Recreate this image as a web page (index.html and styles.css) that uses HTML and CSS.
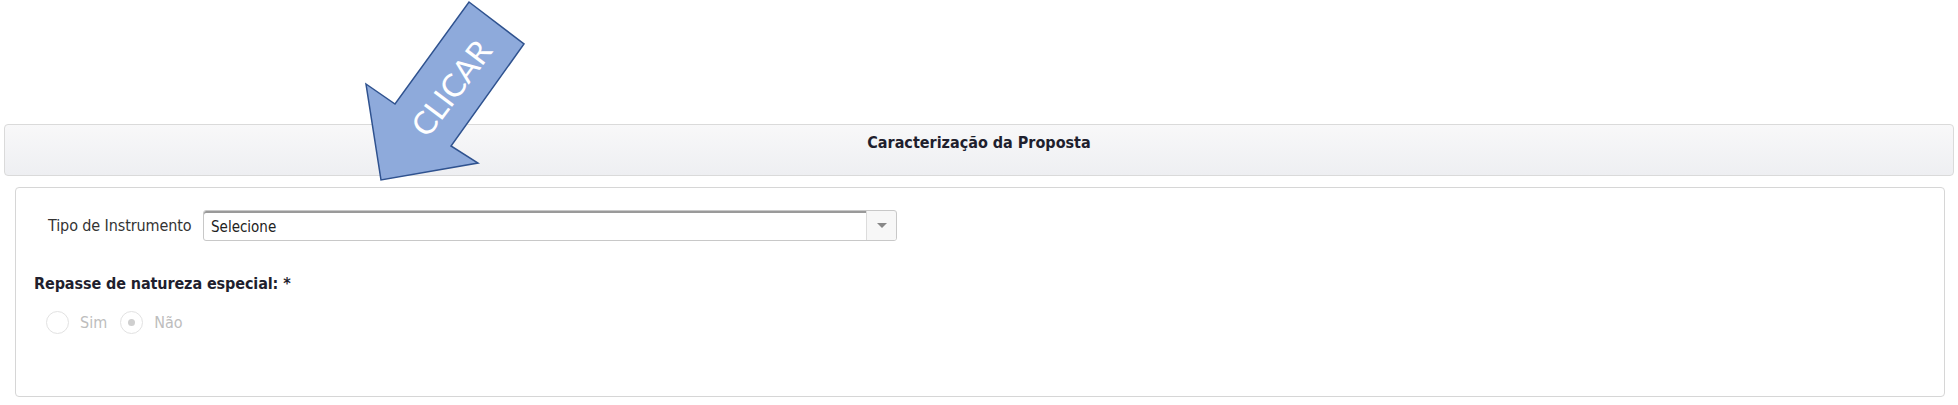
FILE: index.html
```html
<!DOCTYPE html>
<html lang="pt-BR">
<head>
<meta charset="utf-8">
<title>Caracterização da Proposta</title>
<link rel="stylesheet" href="styles.css">
</head>
<body>
<div class="page">
  <div class="header">
    <span class="header-title">Caracterização da Proposta</span>
  </div>
  <div class="panel">
    <div class="field-row">
      <label class="field-label">Tipo de Instrumento</label>
      <div class="select">
        <span class="select-value">Selecione</span>
        <span class="select-btn"><span class="caret"></span></span>
      </div>
    </div>
    <div class="section-title">Repasse de natureza especial: *</div>
    <div class="radio-row">
      <span class="radio"></span><span class="radio-text">Sim</span>
      <span class="radio checked"><span class="dot"></span></span><span class="radio-text">Não</span>
    </div>
  </div>
  <svg class="callout" width="180" height="190" viewBox="355 -5 180 190">
    <polygon points="469,2 524,44 451,146 478,163 381,180 366,84 395,104" fill="#8eaadb" stroke="#2f528f" stroke-width="1.5" stroke-linejoin="miter"/>
    <text x="451" y="100" transform="rotate(-53 451 88)" text-anchor="middle" class="callout-text">CLICAR</text>
  </svg>
</div>
</body>
</html>
```
FILE: styles.css
```css
* { box-sizing: border-box; }
html, body { margin: 0; padding: 0; background: #ffffff; }
.page {
  position: relative;
  width: 1958px;
  height: 405px;
  padding-top: 124px;
  font-family: "DejaVu Sans Condensed", "DejaVu Sans", sans-serif;
}
.header {
  margin: 0 4px;
  height: 52px;
  border: 1px solid #dadada;
  border-radius: 4px;
  background: linear-gradient(#f8f8f9, #eeeff2);
  display: flex;
  justify-content: center;
  padding-top: 8px;
}
.header-title {
  font-weight: bold;
  font-size: 16px;
  color: #1f1f2e;
  line-height: 20px;
}
.panel {
  margin: 11px 13px 0 15px;
  height: 210px;
  border: 1px solid #d6d6d6;
  border-radius: 4px;
  padding: 22px 0 0 18px;
}
.field-row {
  display: flex;
  align-items: center;
  padding-left: 14px;
}
.field-label {
  font-size: 16px;
  line-height: 20px;
  color: #333333;
  width: 155px;
  letter-spacing: -0.1px;
}
.select {
  width: 694px;
  height: 31px;
  border: 1px solid #c8c8c8;
  border-radius: 3px;
  box-shadow: inset 0 2px 0 #9a9a9a;
  display: flex;
  align-items: center;
  overflow: hidden;
}
.select-value {
  flex: 1;
  font-size: 15px;
  line-height: 20px;
  color: #222;
  padding-left: 7px;
  padding-top: 2px;
}
.select-btn {
  width: 30px;
  height: 100%;
  border-left: 1px solid #dcdcdc;
  background: #f7f7f7;
  display: flex;
  align-items: center;
  justify-content: center;
}
.caret {
  width: 0;
  height: 0;
  border-left: 5px solid transparent;
  border-right: 5px solid transparent;
  border-top: 5px solid #888;
}
.section-title {
  margin-top: 33px;
  font-weight: bold;
  font-size: 16px;
  line-height: 20px;
  color: #1f1f2e;
  letter-spacing: -0.1px;
}
.radio-row {
  display: flex;
  align-items: center;
  margin-top: 17px;
  padding-left: 12px;
}
.radio {
  width: 23px;
  height: 23px;
  border-radius: 50%;
  border: 1px solid #e2e2e2;
  display: flex;
  align-items: center;
  justify-content: center;
}
.dot {
  width: 7px;
  height: 7px;
  border-radius: 50%;
  background: #cfcfcf;
}
.radio-text {
  font-size: 16px;
  line-height: 20px;
  color: #bdbdbd;
  margin: 0 13px 0 11px;
}
.callout {
  position: absolute;
  left: 355px;
  top: -5px;
  overflow: visible;
}
.callout-text {
  font-family: Lato, "Open Sans", sans-serif;
  font-size: 32px;
  fill: #ffffff;
}
```
